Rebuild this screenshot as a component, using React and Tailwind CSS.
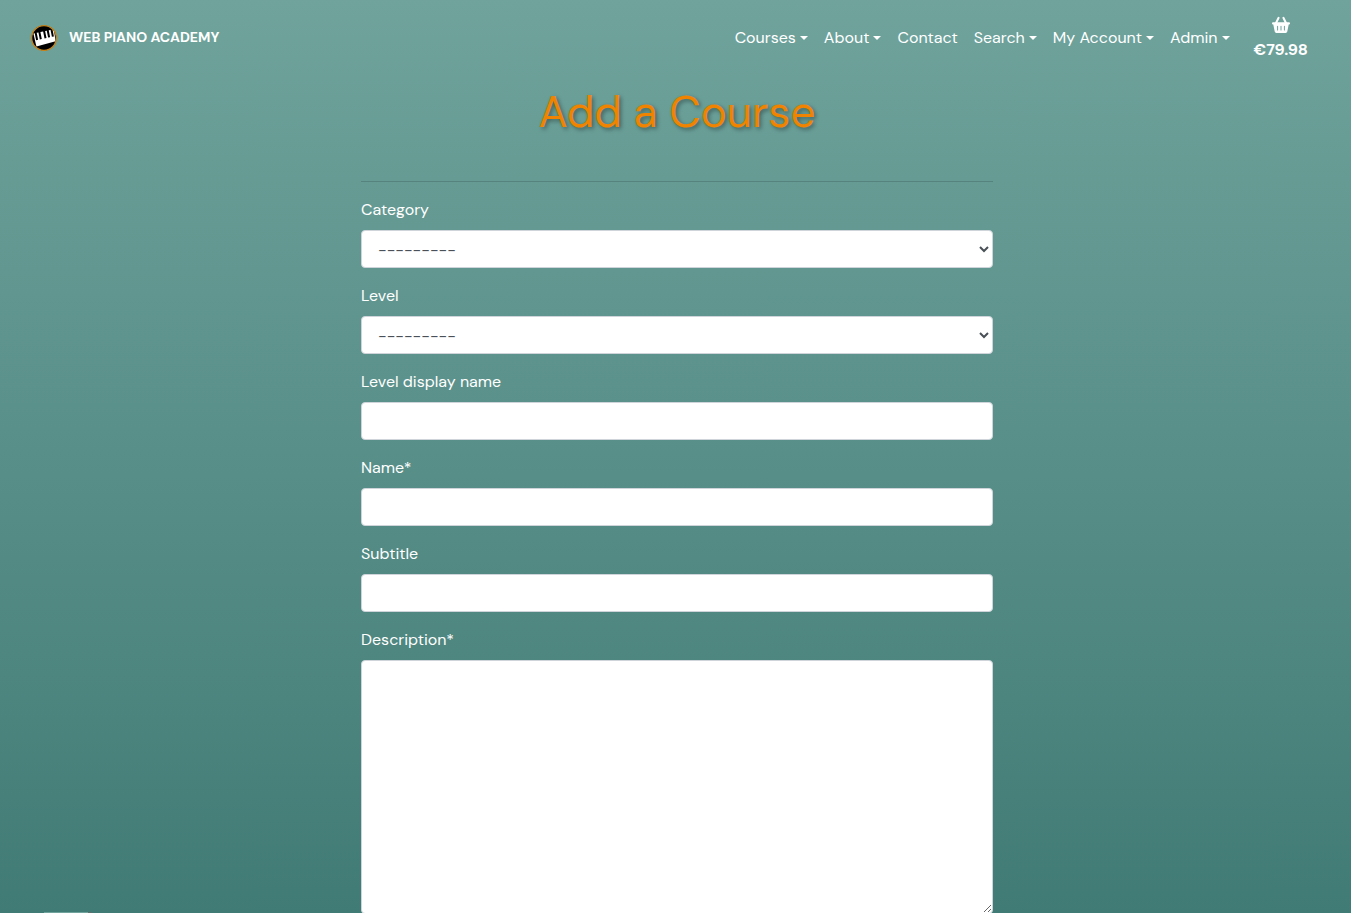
const NAV_ITEMS = [
  { label: 'Courses', menu: true },
  { label: 'About', menu: true },
  { label: 'Contact', menu: false },
  { label: 'Search', menu: true },
  { label: 'My Account', menu: true },
  { label: 'Admin', menu: true },
];

const FIELDS = [
  { id: 'category', label: 'Category', type: 'select' },
  { id: 'level', label: 'Level', type: 'select' },
  { id: 'level-display-name', label: 'Level display name', type: 'text' },
  { id: 'name', label: 'Name*', type: 'text' },
  { id: 'subtitle', label: 'Subtitle', type: 'text' },
  { id: 'description', label: 'Description*', type: 'textarea' },
];

const CONTROL =
  'block w-full rounded border border-[#ced4da] bg-white px-3 text-base text-[#495057]';

function Logo() {
  return (
    <svg viewBox="0 0 28 28" className="size-7" aria-hidden="true">
      <defs>
        <clipPath id="logo-disc">
          <circle cx="14" cy="15" r="12" />
        </clipPath>
      </defs>
      <circle cx="14" cy="15" r="12.4" fill="#000" />
      <g clipPath="url(#logo-disc)">
        <path d="M3.4 10.6L23.8 6.2L25.6 18.2L6.4 23.4z" fill="#fff" />
        <path
          d="M4.6 9.6l2-.4 1.5 7.6-2 .4zM8.3 8.8l2-.4 1.5 7.6-2 .4zM13 7.8l2-.4 1.5 7.6-2 .4zM16.6 7l2-.4 1.5 7.6-2 .4zM20.4 6.2l2-.4 1.5 7.6-2 .4z"
          fill="#000"
        />
      </g>
      <circle cx="14" cy="15" r="12.4" fill="none" stroke="#c5831c" strokeWidth="1.4" />
    </svg>
  );
}

function Basket() {
  return (
    <svg viewBox="0 0 18 18" className="my-1 size-[18px]" aria-hidden="true">
      <path
        d="M6.6 1.8L3.9 7.2M11.4 1.8L14.1 7.2"
        fill="none"
        stroke="currentColor"
        strokeWidth="2"
        strokeLinecap="round"
      />
      <path
        fill="currentColor"
        fillRule="evenodd"
        d="M1 6.2h16a1 1 0 0 1 1 1v.4a1 1 0 0 1-1 1h-.3l-1.4 7a1.7 1.7 0 0 1-1.7 1.4H4.4a1.7 1.7 0 0 1-1.7-1.4l-1.4-7H1a1 1 0 0 1-1-1v-.4a1 1 0 0 1 1-1zM5.1 10.2v3.8a.5.5 0 0 0 1 0v-3.8a.5.5 0 0 0-1 0zM8.5 10.2v3.8a.5.5 0 0 0 1 0v-3.8a.5.5 0 0 0-1 0zM11.9 10.2v3.8a.5.5 0 0 0 1 0v-3.8a.5.5 0 0 0-1 0z"
      />
    </svg>
  );
}

function Caret() {
  return (
    <svg viewBox="0 0 10 5" className="h-1 w-2" aria-hidden="true">
      <path d="M0 0h10L5 5z" fill="currentColor" />
    </svg>
  );
}

function NavItem({ label, menu }) {
  if (!menu) {
    return (
      <a href="#contact" className="px-2 pt-[10px] pb-2">
        {label}
      </a>
    );
  }
  return (
    <button type="button" className="flex items-center gap-1 px-2 pt-[10px] pb-2">
      {label}
      <Caret />
    </button>
  );
}

function Field({ id, label, type }) {
  return (
    <div>
      <label htmlFor={id} className="mb-2 block w-fit leading-6">
        {label}
      </label>
      {type === 'select' && (
        <select id={id} className={`${CONTROL} h-[38px]`}>
          <option>---------</option>
        </select>
      )}
      {type === 'text' && <input id={id} type="text" className={`${CONTROL} h-[38px]`} />}
      {type === 'textarea' && (
        <textarea id={id} rows={10} className={`${CONTROL} resize py-1.5 leading-6`} />
      )}
    </div>
  );
}

export default function App() {
  return (
    <div className="relative min-h-screen overflow-hidden bg-linear-to-b from-[#6fa39c] to-[#417b75] font-['DM_Sans',Inter,sans-serif] text-base text-white">
      <header className="flex items-center justify-between pt-3 pr-[43px] pl-[30px]">
        <a href="#home" className="flex items-center gap-[11px] text-sm font-bold">
          <Logo />
          WEB PIANO ACADEMY
        </a>
        <nav className="flex items-center">
          {NAV_ITEMS.map((item) => (
            <NavItem key={item.label} {...item} />
          ))}
          <a href="#basket" className="ml-4 flex flex-col items-center font-bold">
            <Basket />
            <span className="leading-6">€79.98</span>
          </a>
        </nav>
      </header>

      <main className="flex justify-center pl-[3px]">
        <div className="w-[632px] max-w-full">
          <h1 className="pt-5 text-center text-[44px] leading-[60px] text-[#f08400] [text-shadow:2px_2px_4px_rgba(0,0,0,0.4)]">
            Add a Course
          </h1>
          <hr className="mt-[39px] mb-4 border-black/15" />
          <form className="flex flex-col gap-4">
            {FIELDS.map((field) => (
              <Field key={field.id} {...field} />
            ))}
          </form>
        </div>
      </main>

      <div className="fixed bottom-0 left-11 flex h-px w-12" aria-hidden="true">
        <span className="w-11 bg-[#6fa39c]" />
        <span className="w-1 bg-[#5c6f6d]" />
      </div>
    </div>
  );
}
